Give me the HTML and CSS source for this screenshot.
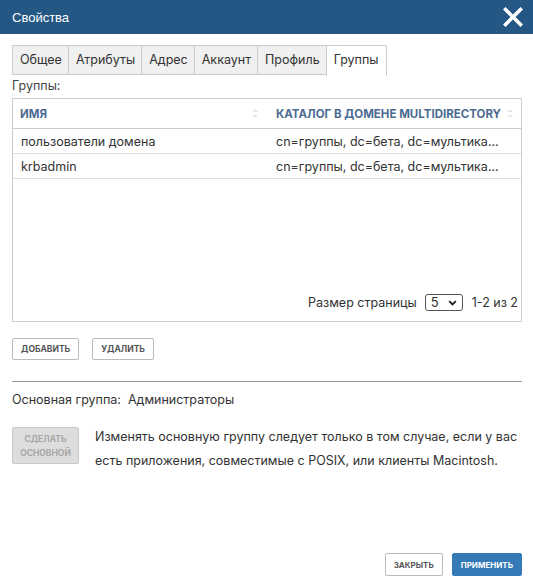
FILE: index.html
```html
<!DOCTYPE html>
<html lang="ru">
<head>
<meta charset="utf-8">
<link rel="stylesheet" href="styles.css">
</head>
<body>
<div class="dialog">
  <div class="titlebar">
    <span class="title">Свойства</span>
    <svg class="close" width="20" height="20" viewBox="0 0 20 20"><path d="M2.5 2.5 L17.5 17.5 M17.5 2.5 L2.5 17.5" stroke="#fff" stroke-width="3.6" stroke-linecap="square" fill="none"/></svg>
  </div>
  <div class="content">
    <div class="tabs">
      <div class="tab">Общее</div>
      <div class="tab">Атрибуты</div>
      <div class="tab">Адрес</div>
      <div class="tab">Аккаунт</div>
      <div class="tab">Профиль</div>
      <div class="tab active">Группы</div>
    </div>
    <div class="label">Группы:</div>
    <div class="gridbox">
      <table class="grid">
        <colgroup><col class="c1"><col class="c2"></colgroup>
        <thead>
          <tr>
            <th><div class="th th1"><span>Имя</span><svg class="sort" width="6" height="9" viewBox="0 0 6 9"><path d="M1 3.2 L3 1.2 L5 3.2 M1 5.8 L3 7.8 L5 5.8" stroke="#c9c9c9" stroke-width="1" fill="none"/></svg></div></th>
            <th><div class="th th2"><span>Каталог в домене MultiDirectory</span><svg class="sort" width="6" height="9" viewBox="0 0 6 9"><path d="M1 3.2 L3 1.2 L5 3.2 M1 5.8 L3 7.8 L5 5.8" stroke="#c9c9c9" stroke-width="1" fill="none"/></svg></div></th>
          </tr>
        </thead>
        <tbody>
          <tr><td>пользователи домена</td><td>cn=группы, dc=бета, dc=мультика...</td></tr>
          <tr><td>krbadmin</td><td>cn=группы, dc=бета, dc=мультика...</td></tr>
        </tbody>
      </table>
      <div class="pager">
        <span>Размер страницы</span>
        <div class="select"><span>5</span><svg width="9" height="6" viewBox="0 0 9 6"><path d="M1.2 1.2 L4.5 4.5 L7.8 1.2" stroke="#222" stroke-width="1.9" fill="none"/></svg></div>
        <span>1-2 из 2</span>
      </div>
    </div>
    <div class="actions">
      <button class="btn">Добавить</button>
      <button class="btn">Удалить</button>
    </div>
    <div class="sep"></div>
    <div class="primary">Основная группа:&nbsp; Администраторы</div>
    <div class="make">
      <button class="btn disabled">Сделать<br>основной</button>
      <p class="note">Изменять основную группу следует только в том случае, если у вас есть приложения, совместимые с POSIX, или клиенты Macintosh.</p>
    </div>
  </div>
  <div class="footer">
    <button class="btn">Закрыть</button>
    <button class="btn blue">Применить</button>
  </div>
</div>
</body>
</html>
```
FILE: styles.css
```css
html, body {
  margin: 0;
  padding: 0;
  background: #fff;
}
body {
  font-family: Inter, "Noto Sans", sans-serif;
  font-size: 12.5px;
  color: #333;
}
.dialog {
  width: 533px;
  height: 585px;
  display: flex;
  flex-direction: column;
}
.titlebar {
  height: 34px;
  background: #245784;
  display: flex;
  align-items: center;
  justify-content: space-between;
  padding: 0 10px 0 12px;
  flex-shrink: 0;
}
.title {
  font-family: "Liberation Sans", Arial, sans-serif;
  font-size: 13px;
  color: #fff;
}
.close {
  display: block;
}
.content {
  padding: 11px 11px 0 12px;
}
.tabs {
  display: flex;
  align-items: flex-start;
}
.tab {
  height: 28px;
  line-height: 28px;
  padding: 0 6px 0 7px;
  border: 1px solid #ccc;
  border-right: none;
  background: #f0f0f0;
  color: #333;
}
.tab.active {
  height: 30px;
  background: #fff;
  border-right: 1px solid #ccc;
  border-bottom: none;
  padding: 0 7px 0 7px;
}
.label {
  margin-top: 2px;
  line-height: 16px;
  color: #444;
}
.gridbox {
  margin-top: 4px;
  height: 222px;
  border: 1px solid #ccc;
  display: flex;
  flex-direction: column;
}
.grid {
  width: 100%;
  border-collapse: collapse;
  table-layout: fixed;
}
.grid col.c1 {
  width: 255px;
}
.grid th {
  height: 29px;
  padding: 0;
  border-bottom: 1px solid #ccc;
  text-align: left;
}
.th {
  display: flex;
  align-items: center;
  justify-content: space-between;
  font-size: 11.5px;
  font-weight: 700;
  text-transform: uppercase;
  color: #4b6b92;
  white-space: nowrap;
}
.th1 {
  padding: 0 10px 0 7px;
}
.th2 {
  padding: 0 8px 0 8px;
}
.sort {
  display: block;
}
.grid td {
  height: 24px;
  padding: 0 8px;
  border-bottom: 1px solid #ddd;
  white-space: nowrap;
  overflow: hidden;
  color: #333;
}
.pager {
  margin-top: auto;
  display: flex;
  align-items: center;
  justify-content: flex-end;
  gap: 8px;
  padding: 0 3px 10px 0;
  color: #333;
}
.select {
  height: 15px;
  border: 1px solid #555;
  border-radius: 3px;
  display: flex;
  align-items: center;
  justify-content: space-between;
  padding: 0 5px 0 5px;
  box-sizing: content-box;
  width: 26px;
  margin-right: 1px;
  font-size: 13px;
  line-height: 15px;
}
.select svg {
  display: block;
}
.btn {
  font-family: Inter, "Noto Sans", sans-serif;
  font-size: 8.5px;
  font-weight: 700;
  text-transform: uppercase;
  color: #555;
  background: #fff;
  border: 1px solid #bbb;
  border-radius: 2px;
  height: 22px;
  padding: 0 8px;
  margin: 0;
  cursor: pointer;
}
.actions {
  display: flex;
  gap: 13px;
  margin-top: 16px;
}
.sep {
  margin-top: 21px;
  border-top: 1px solid #999;
}
.primary {
  margin-top: 10px;
  line-height: 16px;
}
.make {
  display: flex;
  align-items: flex-start;
  gap: 16px;
  margin-top: 17px;
}
.btn.disabled {
  width: 67px;
  height: 37px;
  margin-top: 2px;
  flex-shrink: 0;
  background: #ddd;
  border-color: #c8c8c8;
  color: #a8a8a8;
  line-height: 14px;
  padding: 0;
}
.note {
  margin: 0;
  line-height: 24px;
  color: #333;
}
.footer {
  margin-top: auto;
  display: flex;
  justify-content: flex-end;
  gap: 9px;
  padding: 0 11px 9px 0;
}
.footer .btn {
  height: 23px;
  font-size: 8px;
}
.btn.blue {
  background: #337ab7;
  border-color: #337ab7;
  color: #fff;
}
```
